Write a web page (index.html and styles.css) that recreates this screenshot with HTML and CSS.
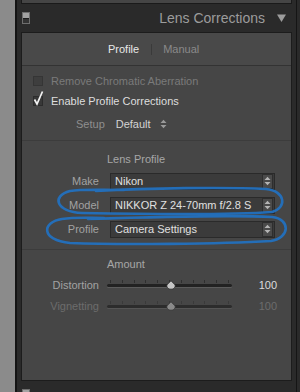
FILE: index.html
```html
<!DOCTYPE html>
<html>
<head>
<meta charset="utf-8">
<link rel="stylesheet" href="styles.css">
</head>
<body>
<div class="app">
  <div class="strip"></div>
  <div class="frame">
    <div class="prev"></div>
    <div class="header">
      <span class="toggle"></span>
      <span class="title">Lens Corrections</span>
      <svg class="tri" width="9" height="8" viewBox="0 0 9 8"><path d="M0 0.5 H9 L4.5 8 Z"/></svg>
    </div>
    <div class="panel">
      <div class="tabs">
        <span class="tab active">Profile</span>
        <span class="tabsep"></span>
        <span class="tab">Manual</span>
      </div>
      <div class="sec sec1">
        <div class="check disabled"><span class="box"></span>Remove Chromatic Aberration</div>
        <div class="check"><span class="box"><svg class="tick" width="14" height="16" viewBox="0 0 14 16"><path d="M2.5 9.5 L5 14 L10.5 1.5"/></svg></span>Enable Profile Corrections</div>
        <div class="setup"><span class="setup-label">Setup</span><span class="setup-val">Default</span><svg class="updown" width="7" height="10" viewBox="0 0 7 10"><path d="M0.5 4 L3.5 0.8 L6.5 4 Z M0.5 6 L3.5 9.2 L6.5 6 Z"/></svg></div>
      </div>
      <div class="sec sec2">
        <div class="sectitle">Lens Profile</div>
        <div class="row"><span class="label">Make</span><div class="select"><span class="sel-text">Nikon</span><span class="stepper"><svg width="7" height="10" viewBox="0 0 7 10"><path d="M0.5 4 L3.5 0.8 L6.5 4 Z M0.5 6 L3.5 9.2 L6.5 6 Z"/></svg></span></div></div>
        <div class="row"><span class="label">Model</span><div class="select"><span class="sel-text">NIKKOR Z 24-70mm f/2.8 S</span><span class="stepper"><svg width="7" height="10" viewBox="0 0 7 10"><path d="M0.5 4 L3.5 0.8 L6.5 4 Z M0.5 6 L3.5 9.2 L6.5 6 Z"/></svg></span></div></div>
        <div class="row"><span class="label">Profile</span><div class="select"><span class="sel-text">Camera Settings</span><span class="stepper"><svg width="7" height="10" viewBox="0 0 7 10"><path d="M0.5 4 L3.5 0.8 L6.5 4 Z M0.5 6 L3.5 9.2 L6.5 6 Z"/></svg></span></div></div>
      </div>
      <div class="sec sec3">
        <div class="sectitle">Amount</div>
        <div class="srow"><span class="label">Distortion</span><div class="slider"><span class="ticks"></span><span class="track"></span><svg class="thumb" width="10" height="10" viewBox="0 0 10 10"><path d="M5 0.8 L9.2 5 Q9.5 9.2 5 9.2 Q0.5 9.2 0.8 5 Z"/></svg></div><span class="num">100</span></div>
        <div class="srow dim"><span class="label">Vignetting</span><div class="slider"><span class="ticks"></span><span class="track"></span><svg class="thumb" width="10" height="10" viewBox="0 0 10 10"><path d="M5 0.8 L9.2 5 Q9.5 9.2 5 9.2 Q0.5 9.2 0.8 5 Z"/></svg></div><span class="num">100</span></div>
      </div>
    </div>
    <div class="next"><span class="toggle"></span></div>
  </div>
  <svg class="annot" width="300" height="392" viewBox="0 0 300 392">
    <path d="M96 191 C150 188 225 187 266 189 C286 191 287 208 272 212 C230 215 140 214 82 213 C56 212 51 196 70 191 C82 189 98 190 124 190"/>
    <path d="M88 219 C150 217 236 215 272 217 C291 219 290 238 271 241 C220 244 120 245 70 243 C40 240 42 222 62 219 C76 217 88 218 104 218"/>
  </svg>
</div>
</body>
</html>
```
FILE: styles.css
```css
html, body {
  margin: 0;
  padding: 0;
}
body {
  width: 300px;
  height: 392px;
  overflow: hidden;
  background: #2a2a2a;
  font-family: "Liberation Sans", Arial, sans-serif;
  font-size: 11px;
  color: #a8a8a8;
}
.app {
  position: relative;
  display: flex;
  height: 392px;
}
.strip {
  width: 15px;
  flex: none;
  background: #8b8b8b;
}
.frame {
  flex: 1;
  display: flex;
  flex-direction: column;
  border-left: 2px solid #141414;
  padding: 0 8px 0 4px;
  background: #2a2a2a linear-gradient(to right, transparent 279px, #151515 279px, #151515 280px, transparent 280px);
}
.prev {
  flex: none;
  height: 3px;
  background: #454545;
  border: 1px solid #1a1a1a;
  border-top: 0;
}
.header {
  flex: none;
  height: 28px;
  display: flex;
  align-items: center;
}
.toggle {
  display: block;
  width: 8px;
  height: 12px;
  margin-left: 1px;
  box-sizing: border-box;
  border: 1px solid #6e6e6e;
  background: linear-gradient(to bottom, #a2a2a2 0, #a2a2a2 5px, #1c1c1c 5px, #1c1c1c 6px, #333 6px);
}
.title {
  margin-left: auto;
  font-size: 14px;
  color: #9c9c9c;
}
.tri {
  margin: 0 6px 0 12px;
  fill: #9c9c9c;
}
.panel {
  flex: none;
  height: 349px;
  box-sizing: border-box;
  border: 1px solid #1c1c1c;
  background: #464646;
}
.tabs {
  height: 32px;
  border-bottom: 1px solid #333;
  display: flex;
  align-items: center;
  padding-left: 86px;
  background: #494949;
}
.tab {
  color: #8a8a8a;
}
.tab.active {
  color: #e8e8e8;
}
.tabsep {
  width: 1px;
  height: 11px;
  margin: 0 11px 0 12px;
  background: #3a3a3a;
}
.sec1 {
  padding: 5px 0 6px;
  border-bottom: 1px solid #3c3c3c;
}
.check {
  height: 20px;
  display: flex;
  align-items: center;
  padding-left: 11px;
  color: #dedede;
}
.check.disabled {
  color: #7a7a7a;
}
.box {
  position: relative;
  width: 10px;
  height: 10px;
  box-sizing: border-box;
  margin-right: 8px;
  border: 1px solid #2c2c2c;
  background: #383838;
}
.disabled .box {
  border-color: #353535;
  background: #3e3e3e;
}
.tick {
  position: absolute;
  left: -2px;
  top: -7px;
  fill: none;
  stroke: #f2f2f2;
  stroke-width: 1.7;
}
.setup {
  height: 20px;
  margin-top: 3px;
  display: flex;
  align-items: center;
  padding-left: 54px;
}
.setup-label {
  color: #8e8e8e;
}
.setup-val {
  margin-left: 11px;
  color: #d4d4d4;
}
.updown {
  margin-left: 9px;
  fill: #9a9a9a;
}
.sec2 {
  padding-bottom: 8px;
  border-bottom: 1px solid #3c3c3c;
}
.sectitle {
  height: 19px;
  line-height: 19px;
  padding-left: 85px;
  color: #a6a6a6;
}
.sec2 .sectitle {
  padding-top: 9px;
}
.sec3 .sectitle {
  padding-top: 5px;
}
.row {
  height: 24px;
  display: flex;
  align-items: center;
}
.label {
  width: 77px;
  flex: none;
  text-align: right;
  color: #a2a2a2;
}
.select {
  margin-left: 11px;
  width: 165px;
  height: 17px;
  box-sizing: border-box;
  border: 1px solid #2a2a2a;
  background: #3b3b3b;
  display: flex;
  align-items: center;
}
.sel-text {
  flex: 1;
  padding-left: 4px;
  color: #e0e0e0;
  white-space: nowrap;
}
.stepper {
  width: 11px;
  height: 15px;
  box-sizing: border-box;
  margin-right: 1px;
  border: 1px solid #2e2e2e;
  background: #4a4a4a;
  display: flex;
  align-items: center;
  justify-content: center;
}
.stepper svg {
  fill: #b4b4b4;
}
.srow {
  height: 21px;
  display: flex;
  align-items: center;
}
.slider {
  position: relative;
  margin-left: 8px;
  width: 125px;
  height: 12px;
}
.ticks {
  position: absolute;
  left: 3px;
  right: 3px;
  top: 1px;
  height: 3px;
  background: repeating-linear-gradient(to right, #2f2f2f 0, #2f2f2f 1px, transparent 1px, transparent 11.8px);
}
.track {
  position: absolute;
  left: 0;
  right: 0;
  top: 5px;
  height: 3px;
  border-radius: 2px;
  background: #222;
  box-shadow: 0 1px 0 #5c5c5c;
}
.thumb {
  position: absolute;
  left: 59px;
  top: 1px;
  fill: #c6c6c6;
  stroke: #2a2a2a;
  stroke-width: 0.8;
}
.num {
  width: 45px;
  text-align: right;
  color: #dcdcdc;
}
.dim .label,
.dim .num {
  color: #6c6c6c;
}
.dim .track {
  background: #2c2c2c;
  box-shadow: 0 1px 0 #555;
}
.dim .ticks {
  background: repeating-linear-gradient(to right, #3a3a3a 0, #3a3a3a 1px, transparent 1px, transparent 11.8px);
}
.dim .thumb {
  fill: #8a8a8a;
  stroke: #363636;
}
.next {
  flex: 1;
  padding-top: 8px;
}
.annot {
  position: absolute;
  left: 0;
  top: 0;
  fill: none;
  stroke: #2272c2;
  stroke-width: 2.6;
  stroke-linecap: round;
  stroke-linejoin: round;
  opacity: 0.92;
}
```
